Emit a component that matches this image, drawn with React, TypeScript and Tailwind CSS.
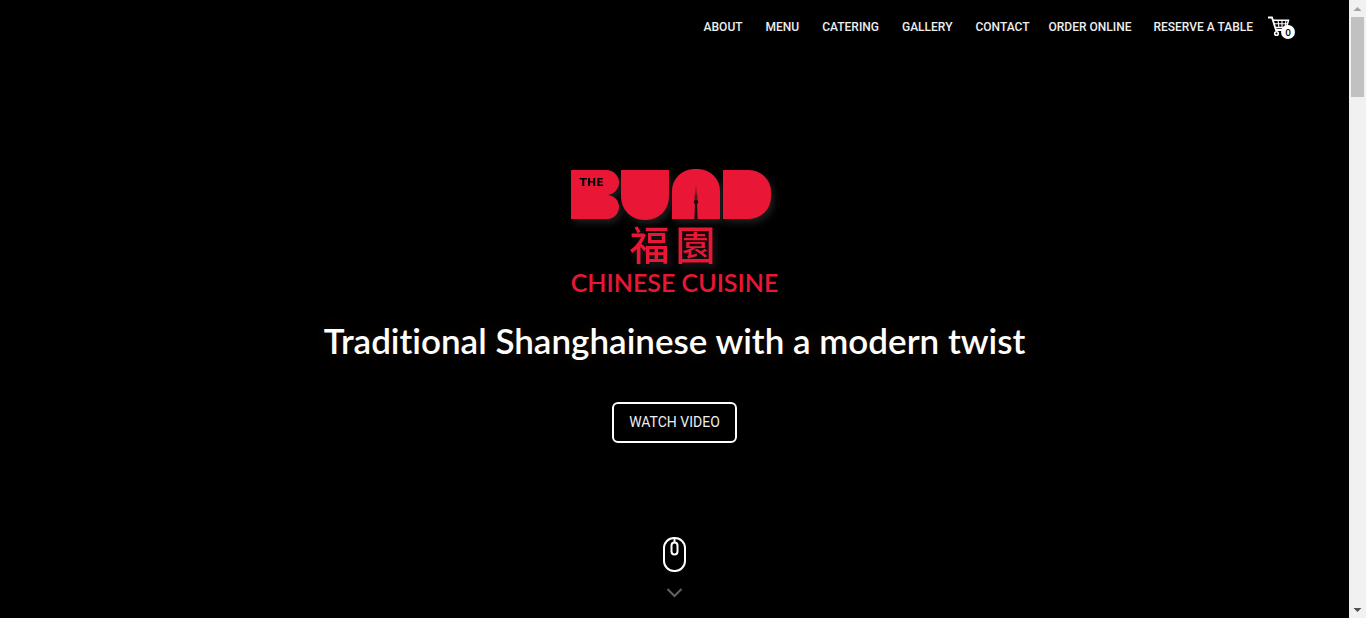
import React from "react";

const links = ["About", "Menu", "Catering", "Gallery", "Contact"];

function CartIcon() {
  return (
    <svg viewBox="0 0 24 22" className="h-[22px] w-6" fill="none" stroke="white" aria-hidden="true">
      <path d="M0 1.5h4l4 12.5h7" strokeWidth="1.8" />
      <path d="M5 4.2h15.5l-2 7.3H8" strokeWidth="1.5" />
      <path d="M6 7.8h14M10 4l1 8M14 4v8M18 4l-1 8" strokeWidth="1.1" />
      <circle cx="8.5" cy="17.5" r="1.8" strokeWidth="1.6" />
      <circle cx="16.5" cy="17.5" r="1.8" strokeWidth="1.6" />
    </svg>
  );
}

function Logo() {
  return (
    <div className="flex w-52 flex-col items-center text-[#e91735]" role="img" aria-label="The Bund Chinese Cuisine">
      <div className="flex w-full items-start gap-[2px] drop-shadow-[3px_4px_3px_#1c1c1c]">
        <div className="mt-px flex w-12 flex-col">
          <div className="h-[25px] rounded-r-[13px] bg-[#e91735] pt-[7px] pl-[9px] font-['DejaVu_Sans',sans-serif] text-[11px] leading-[11px] font-bold text-black">
            THE
          </div>
          <div className="h-6 rounded-r-[13px] bg-[#e91735]" />
        </div>
        <div className="mt-px h-[50px] w-12 rounded-b-[23px] bg-[#e91735]" />
        <div className="ml-px h-[50px] w-12">
          <svg viewBox="0 0 48 50" className="h-full w-full" aria-hidden="true">
            <rect width="48" height="50" rx="22" fill="#e91735" />
            <rect y="24" width="48" height="26" fill="#e91735" />
            <path d="M24 16l.6 8 .9 3v5h-3v-5l.9-3z" fill="#5a1a20" />
            <circle cx="24" cy="33" r="2.2" fill="#171012" />
            <path d="M23 34h2l.6 16h-3.2z" fill="#171012" />
          </svg>
        </div>
        <div className="mt-px ml-px h-[49px] w-12 rounded-r-[22px] bg-[#e91735]" />
      </div>
      <div className="flex h-[50px] items-start gap-[6px] pr-1 font-['Noto_Sans_CJK_TC',sans-serif] text-[40px] leading-[46px] font-medium drop-shadow-[3px_4px_3px_#1c1c1c]">
        <span>福</span>
        <span>園</span>
      </div>
      <div className="font-['Lato',sans-serif] text-[25px] leading-6 font-semibold whitespace-nowrap">CHINESE CUISINE</div>
    </div>
  );
}

export default function App() {
  return (
    <div className="flex min-h-screen bg-black font-['Lato',sans-serif] text-white">
      <div className="flex min-w-0 flex-1 flex-col">
        <header className="flex h-14 items-start justify-end pt-4 pr-[54px]">
          <nav className="flex items-center font-['Roboto',sans-serif] text-xs leading-[22px] font-medium text-[#eeeeee] uppercase">
            <div className="flex gap-[23px]">
              {links.map((label) => (
                <a key={label} href="#">{label}</a>
              ))}
            </div>
            <a href="#" className="ml-[19px]">Order Online</a>
            <a href="#" className="ml-[22px]">Reserve a Table</a>
          </nav>
          <a href="#" aria-label="Shopping cart" className="relative ml-[15px] w-[27px]">
            <CartIcon />
            <span className="absolute top-[9px] right-0 flex size-[14px] items-center justify-center rounded-full bg-white text-[9px] leading-none font-bold text-black">
              0
            </span>
          </a>
        </header>
        <main className="flex flex-1 flex-col items-center pt-[113px]">
          <Logo />
          <h1 className="mt-[22px] text-[35px] leading-[48px] font-semibold whitespace-nowrap [font-variant-ligatures:none] [text-shadow:0_0_16px_#24180c]">
            Traditional Shanghainese with a modern twist
          </h1>
          <button type="button" className="mt-[38px] h-[41px] w-[125px] rounded-md border-2 border-white pb-px font-['Roboto',sans-serif] text-sm text-[#eeeeee] uppercase">
            Watch Video
          </button>
          <a href="#" aria-label="Scroll down" className="mt-auto flex flex-col items-center pb-5">
            <svg viewBox="0 0 24 36" className="h-9 w-6" fill="none" stroke="white" strokeWidth="2" aria-hidden="true">
              <rect x="1" y="1" width="21" height="33" rx="10" />
              <rect x="8.5" y="5.5" width="6" height="12" rx="3" />
              <path d="M11.5 1v5" />
            </svg>
            <svg viewBox="0 0 16 10" className="mt-[15px] h-[10px] w-4" fill="none" stroke="#626262" strokeWidth="2" aria-hidden="true">
              <path d="M.5 1l7 7 7-7" />
            </svg>
          </a>
        </main>
      </div>
      <div className="flex w-[17px] flex-col items-center justify-between bg-[#f1f1f1]" aria-hidden="true">
        <div className="flex flex-col items-center">
          <svg viewBox="0 0 17 17" className="size-[17px]"><path d="M8.5 7l4 4h-8z" fill="#a3a3a3" /></svg>
          <div className="h-20 w-[13px] bg-[#c1c1c1]" />
        </div>
        <svg viewBox="0 0 17 17" className="size-[17px]"><path d="M8.5 11l-4-4h8z" fill="#505050" /></svg>
      </div>
    </div>
  );
}
